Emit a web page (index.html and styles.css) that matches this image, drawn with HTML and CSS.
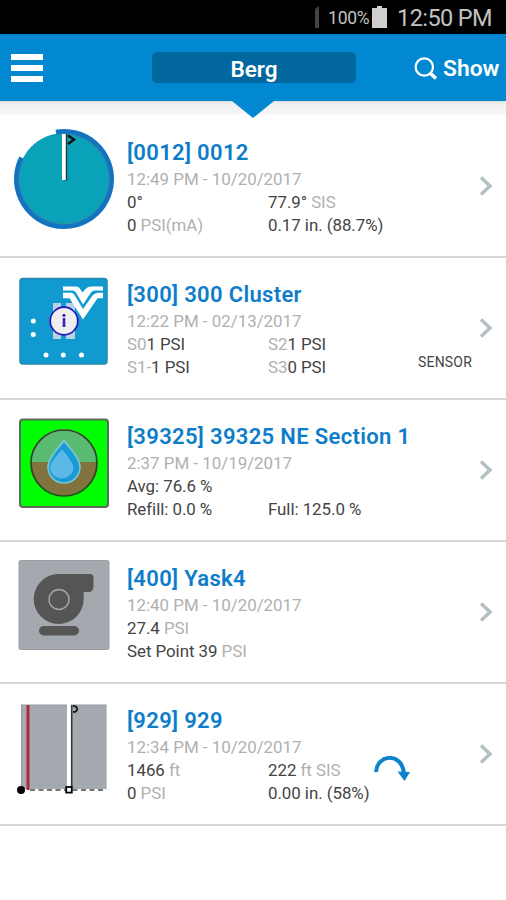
FILE: index.html
```
<!DOCTYPE html>
<html lang="en">
<head>
    <meta charset="UTF-8">
    <meta name="viewport" content="width=device-width, initial-scale=1.0">
    <title>Berg</title>
    <link rel="stylesheet" href="styles.css">
</head>
<body>
    <div class="status-bar">
        <svg class="signal" width="5" height="24" viewBox="0 0 5 24"><path d="M0 4 L4 1 V23 H0 Z" fill="#444"/></svg>
        <span class="percent">100%</span>
        <svg class="battery" width="15" height="22" viewBox="0 0 15 22"><path d="M5 0H10V2H15V22H0V2H5Z" fill="#cfcfcf"/></svg>
        <span class="time">12:50 PM</span>
    </div>

    <header class="header">
        <button class="menu" aria-label="Menu"><i></i><i></i><i></i></button>
        <div class="group">Berg</div>
        <button class="show">
            <svg width="24" height="24" viewBox="0 0 24 24" fill="none" stroke="#fff"><circle cx="10.3" cy="10" r="8.7" stroke-width="2.2"/><path d="M16 16 L22 21.5" stroke-width="3.6"/></svg>
            <span>Show</span>
        </button>
        <div class="pointer"></div>
    </header>
    <div class="shadow"></div>

    <main class="list">
        <section class="row">
            <svg class="icon" viewBox="0 0 120 130">
                <circle cx="64" cy="63" r="46" fill="#0aa2b8"/>
                <path d="M56 16.2 A47.5 47.5 0 1 1 21.6 41.6" fill="none" stroke="#1273c0" stroke-width="5"/>
                <path d="M56.6 18.6 A45 45 0 1 1 23.9 42.6" fill="none" stroke="#3c86a4" stroke-width="1"/>
                <rect x="64" y="18" width="3.2" height="46.5" fill="#163c40"/>
                <rect x="62" y="18" width="3.8" height="46" fill="#fff"/>
                <path d="M68 19.5 L74 23.5 L68 28" fill="none" stroke="#111" stroke-width="2.4"/>
            </svg>
            <div class="info">
                <h2>[0012] 0012</h2>
                <p class="date">12:49 PM - 10/20/2017</p>
                <div class="values">
                    <span>0°</span><span>77.9° <em>SIS</em></span>
                    <span>0 <em>PSI(mA)</em></span><span>0.17 in. (88.7%)</span>
                </div>
            </div>
            <svg class="arrow" viewBox="0 0 14 20"><path d="M2 1.5 L11 10 L2 18.5"/></svg>
        </section>

        <section class="row">
            <svg class="icon" viewBox="0 0 120 130">
                <rect x="20" y="20.5" width="87" height="85.5" rx="3" fill="#109ad0" stroke="#2488b0" stroke-width="1.5"/>
                <path d="M53 45h8v36h-8zM66 45h9v36h-9z" fill="#b8d3e3"/>
                <path d="M59 55h10v18h-10z" fill="#86a9bd"/>
                <path d="M63 28.5H76Q79 28.5 80.5 31.5L82.5 34.5L85.5 31Q87.5 28.5 91 28.5H103V32.5H95Q92.5 32.5 91 34.5L83 46.5L76.5 35.5Q75 32.5 72 32.5H63Z" fill="#fff"/>
                <path d="M63 34.8H71Q73 34.8 74.5 37L83 51L92.5 37.5Q95 34.8 98 34.8H103V40.3H97.5L83 61.5L69.5 40.3H63Z" fill="#fff"/>
                <circle cx="64" cy="63" r="13.8" fill="#eee" stroke="#2415bd" stroke-width="1.7"/>
                <path d="M64 60V69" stroke="#3b23bd" stroke-width="2.6"/>
                <circle cx="64" cy="57.3" r="1.6" fill="#3b23bd"/>
                <g fill="#fff"><circle cx="33.3" cy="63" r="2.5"/><circle cx="33.3" cy="76.5" r="2.5"/><circle cx="46" cy="97" r="2.5"/><circle cx="63.3" cy="97" r="2.5"/><circle cx="81.5" cy="97" r="2.5"/></g>
            </svg>
            <div class="info">
                <h2>[300] 300 Cluster</h2>
                <p class="date">12:22 PM - 02/13/2017</p>
                <div class="values">
                    <span><em>S0</em>1 PSI</span><span><em>S2</em>1 PSI</span>
                    <span><em>S1-</em>1 PSI</span><span><em>S3</em>0 PSI</span>
                </div>
            </div>
            <div class="sensor">SENSOR</div>
            <svg class="arrow" viewBox="0 0 14 20"><path d="M2 1.5 L11 10 L2 18.5"/></svg>
        </section>

        <section class="row">
            <svg class="icon" viewBox="0 0 120 130">
                <rect x="20" y="19.5" width="88" height="87.5" rx="3" fill="#0f0" stroke="#5b6a5b" stroke-width="2"/>
                <path d="M31 62 A33 33 0 0 1 97 62Z" fill="#5abb73"/>
                <path d="M31 62 A33 33 0 0 0 97 62Z" fill="#82733e"/>
                <circle cx="64" cy="63" r="33" fill="none" stroke="#33402b" stroke-width="1.7"/>
                <path d="M64 40.5C68 47 80 57 80 67A16 16 0 0 1 48 67C48 57 60 47 64 40.5Z" fill="#179bd7" stroke="#7dc6cf" stroke-width="1.6"/>
                <path d="M62 49C65 54 73.5 61 73.5 69A12 12 0 0 1 50 69C50 61 59 54 62 49Z" fill="#5cb8e6"/>
            </svg>
            <div class="info">
                <h2>[39325] 39325 NE Section 1</h2>
                <p class="date">2:37 PM - 10/19/2017</p>
                <div class="values">
                    <span>Avg: 76.6 %</span><span></span>
                    <span>Refill: 0.0 %</span><span>Full: 125.0 %</span>
                </div>
            </div>
            <svg class="arrow" viewBox="0 0 14 20"><path d="M2 1.5 L11 10 L2 18.5"/></svg>
        </section>

        <section class="row">
            <svg class="icon" viewBox="0 0 120 130">
                <rect x="19" y="18.5" width="90" height="89" rx="1.5" fill="#a4a9af" stroke="#999ea4"/>
                <path d="M59 32H90Q93.5 32 93.5 36V44Q93.5 50 88 50H83.7V57A25 25 0 1 1 59 32Z" fill="#555"/>
                <circle cx="59" cy="57.5" r="10" fill="none" stroke="#aaa" stroke-width="1.3"/>
                <rect x="39" y="84" width="40" height="9.5" rx="4.7" fill="#555"/>
            </svg>
            <div class="info">
                <h2>[400] Yask4</h2>
                <p class="date">12:40 PM - 10/20/2017</p>
                <div class="values">
                    <span>27.4 <em>PSI</em></span><span></span>
                    <span class="wide">Set Point 39 <em>PSI</em></span>
                </div>
            </div>
            <svg class="arrow" viewBox="0 0 14 20"><path d="M2 1.5 L11 10 L2 18.5"/></svg>
        </section>

        <section class="row">
            <svg class="icon" viewBox="0 0 120 130">
                <rect x="21.5" y="21" width="84.5" height="84.5" fill="#a5aab0" stroke="#959ba0"/>
                <path d="M22 106H106" stroke="#fff" stroke-width="2"/>
                <path d="M30 106H106" stroke="#777" stroke-width="1.8" stroke-dasharray="5 3.5"/>
                <path d="M28 21V106" stroke="#ab2b3b" stroke-width="3"/>
                <path d="M69 20V103" stroke="#fff" stroke-width="4"/>
                <path d="M71.7 21V103" stroke="#343b3e" stroke-width="1.6"/>
                <path d="M73 22C78.5 22 78.5 28 73 28" fill="none" stroke="#222" stroke-width="2"/>
                <circle cx="21" cy="106" r="4" fill="#000"/>
                <rect x="66.2" y="103" width="5.6" height="5.6" fill="#fff" stroke="#000" stroke-width="1.8"/>
            </svg>
            <div class="info">
                <h2>[929] 929</h2>
                <p class="date">12:34 PM - 10/20/2017</p>
                <div class="values">
                    <span>1466 <em>ft</em></span><span>222 <em>ft SIS</em></span>
                    <span>0 <em>PSI</em></span><span>0.00 in. (58%)</span>
                </div>
            </div>
            <svg class="direction" viewBox="0 0 36 26"><path d="M2 16C3 -2 28 -4 29.8 17" fill="none" stroke="#0c83ca" stroke-width="4"/><path d="M23.5 15.5L36 16L30.5 25Z" fill="#0c83ca"/></svg>
            <svg class="arrow" viewBox="0 0 14 20"><path d="M2 1.5 L11 10 L2 18.5"/></svg>
        </section>
    </main>
</body>
</html>
```
FILE: styles.css
```
* {
    box-sizing: border-box;
}

body {
    margin: 0;
    min-height: 900px;
    background-color: #fff;
    font-family: Roboto, Arial, sans-serif;
}

button {
    padding: 0;
    border: none;
    background: none;
    font-family: inherit;
}

/* Status bar */
.status-bar {
    display: flex;
    justify-content: flex-end;
    align-items: center;
    height: 34px;
    padding-right: 14px;
    background-color: #000;
    color: #c2c2c2;
}

.percent {
    margin-left: 8px;
    width: 41px;
    padding-top: 2px;
    font-size: 17.5px;
    letter-spacing: -0.3px;
}

.battery {
    margin-left: 3px;
}

.time {
    margin-left: 10px;
    padding-top: 2px;
    font-size: 23.5px;
    line-height: 30px;
    letter-spacing: -0.6px;
}

/* Header */
.header {
    position: relative;
    display: grid;
    grid-template-columns: 141px 204px 1fr;
    align-items: center;
    height: 67px;
    padding-left: 11px;
    background-color: #0288d1;
    color: #fff;
}

.menu {
    display: flex;
    flex-direction: column;
    gap: 5px;
    width: 32px;
}

.menu i {
    height: 6px;
    background-color: #fff;
}

.group {
    height: 31px;
    border-radius: 5px;
    background-color: #01679e;
    font-size: 22.5px;
    font-weight: 600;
    line-height: 34px;
    text-align: center;
}

.show {
    display: flex;
    align-items: center;
    gap: 5px;
    padding: 2px 0 0 58px;
    color: #fff;
    font-size: 22.8px;
    font-weight: 600;
}

.pointer {
    position: absolute;
    top: 67px;
    left: 232px;
    border: 21px solid transparent;
    border-top: 17px solid #0288d1;
    border-bottom: 0;
}

.shadow {
    height: 15px;
    background: linear-gradient(#e2e2e2, #f2f2f2 25%, #f4f4f4 75%, #fff);
}

/* Device list */
.row {
    display: flex;
    position: relative;
    height: 142px;
    border-bottom: 2px solid #d8d8d8;
}

.icon {
    width: 120px;
    height: 130px;
}

.info {
    width: 340px;
    padding: 22px 0 0 7px;
    color: #444;
    font-size: 16.9px;
    font-weight: 400;
    line-height: 23px;
}

.info h2 {
    margin: 0 0 1px;
    color: #0d7dc9;
    font-size: 22px;
    font-weight: 600;
    line-height: 29px;
    letter-spacing: 0.33px;
}

.info p {
    margin: 0;
}

.date,
.info em {
    color: #b0b0b0;
    font-style: normal;
}

.values {
    display: grid;
    grid-template-columns: 141px 1fr;
    grid-auto-rows: 23px;
    letter-spacing: -0.05px;
}

.wide {
    white-space: nowrap;
}

.arrow {
    width: 14px;
    height: 20px;
    margin: 60px 0 0 19px;
    fill: none;
    stroke: #b3bfc2;
    stroke-width: 3.5;
}

.sensor {
    position: absolute;
    top: 94px;
    left: 418px;
    color: #444;
    font-size: 14px;
    line-height: 20px;
    letter-spacing: 0.2px;
}

.direction {
    position: absolute;
    top: 72px;
    left: 374px;
    width: 36px;
    height: 26px;
}
```
